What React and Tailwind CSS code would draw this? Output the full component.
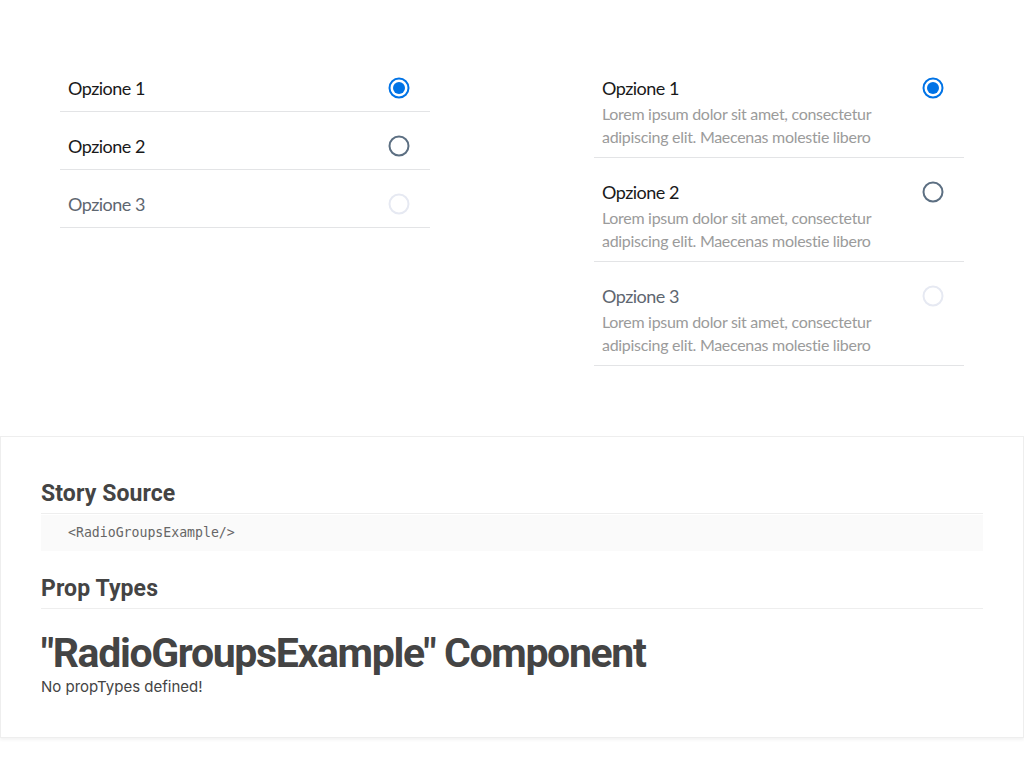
import React from "react";

const lorem = "Lorem ipsum dolor sit amet, consectetur adipiscing elit. Maecenas molestie libero";

const Radio = ({ checked, disabled }) => {
  const ring = disabled ? "#e6e9f2" : checked ? "#0073e6" : "#5c6f82";
  return (
    <svg width="24" height="24" viewBox="0 0 24 24" className="shrink-0">
      <circle cx="12" cy="12" r="9.5" fill="none" stroke={ring} strokeWidth="2" />
      {checked && <circle cx="12" cy="12" r="6" fill="#0073e6" />}
    </svg>
  );
};

const options = [
  { label: "Opzione 1", checked: true },
  { label: "Opzione 2" },
  { label: "Opzione 3", disabled: true },
];

const RadioRow = ({ option, withText }) => (
  <div
    className={
      "border-b border-[#e3e4e6] pl-2 pr-[19px] pt-[22px] " +
      (withText ? "pb-[9px]" : "pb-[11px]")
    }
  >
    <div className="flex items-center justify-between h-6">
      <span
        className={
          "text-[18px] leading-6 tracking-[-0.5px] " +
          (option.disabled ? "text-[#5e6670]" : "text-[#19191a]")
        }
      >
        {option.label}
      </span>
      <Radio checked={option.checked} disabled={option.disabled} />
    </div>
    {withText && (
      <p className="mt-[2px] w-[290px] text-[16px] leading-[23px] tracking-[-0.3px] text-[#9b9b9b]">
        {lorem}
      </p>
    )}
  </div>
);

const RadioGroupsExample = () => (
  <div className="flex pl-[60px] pt-[54px] gap-[164px] font-['Lato',sans-serif]">
    <div className="w-[370px]">
      {options.map((o) => (
        <RadioRow key={o.label} option={o} />
      ))}
    </div>
    <div className="w-[370px]">
      {options.map((o) => (
        <RadioRow key={o.label} option={o} withText />
      ))}
    </div>
  </div>
);

const Heading = ({ children }) => (
  <h2 className="text-[23px] leading-9 font-bold tracking-[0.1px] text-[#444] border-b border-[#eee] pb-px">
    {children}
  </h2>
);

export default function App() {
  return (
    <div className="min-h-screen bg-white">
      <RadioGroupsExample />
      <div className="mt-[70px] w-[1024px] border border-[#eee] shadow-[0_2px_3px_rgba(0,0,0,0.05)] px-10 pt-[39px] pb-10 font-['Roboto',sans-serif]">
        <div className="pb-px">
          <Heading>Story Source</Heading>
        </div>
        <pre className="h-9 bg-[#fafafa] pl-[27px] font-['DejaVu_Sans_Mono',monospace] text-[13.2px] leading-9 text-[#666]">
          {"<RadioGroupsExample/>"}
        </pre>
        <div className="mt-5">
          <Heading>Prop Types</Heading>
        </div>
        <h1 className="mt-5 text-[41px] leading-[48px] font-bold tracking-[-1.35px] text-[#444]">
          "RadioGroupsExample" Component
        </h1>
        <p className="font-['Inter',sans-serif] text-[15px] leading-5 text-[#444]">No propTypes defined!</p>
      </div>
    </div>
  );
}
